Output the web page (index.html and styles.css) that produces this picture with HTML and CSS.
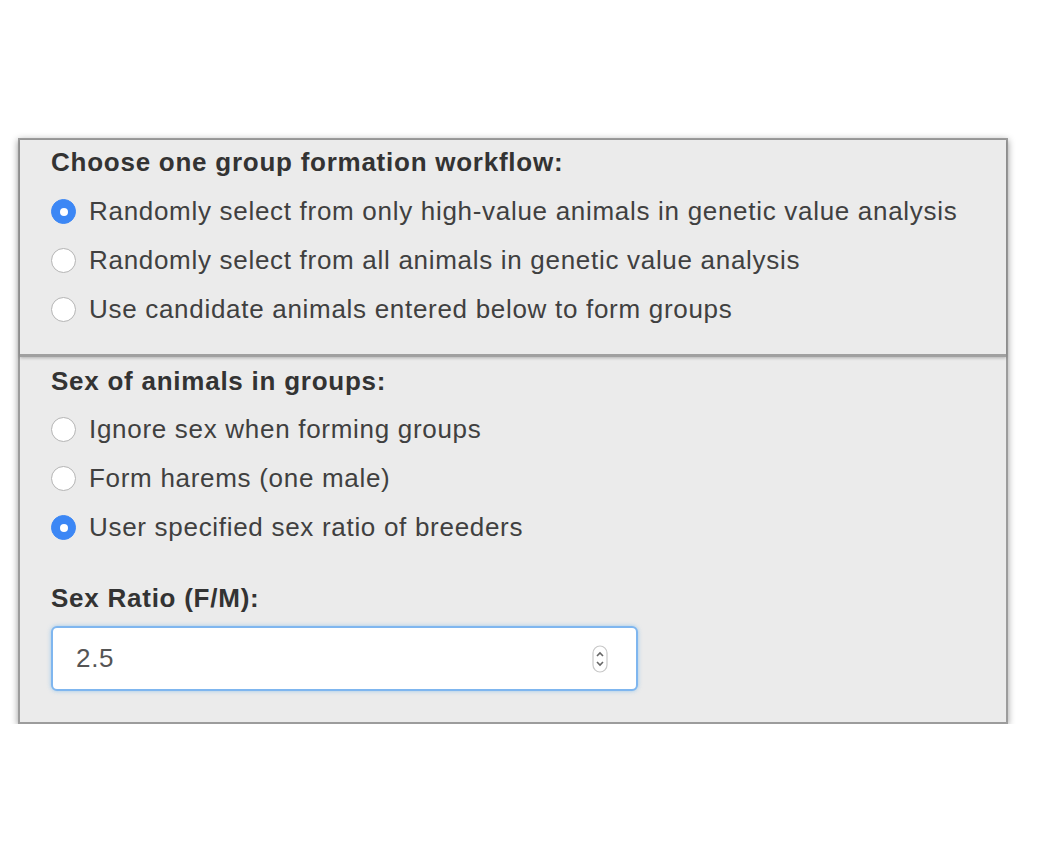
FILE: index.html
```html
<!DOCTYPE html>
<html>
<head>
<meta charset="utf-8">
<link rel="stylesheet" href="styles.css">
</head>
<body>
<div class="box">
  <div class="well well-top">
    <div class="label">Choose one group formation workflow:</div>
    <div class="radios">
      <label class="radio"><span class="dot on"></span><span>Randomly select from only high-value animals in genetic value analysis</span></label>
      <label class="radio"><span class="dot"></span><span>Randomly select from all animals in genetic value analysis</span></label>
      <label class="radio"><span class="dot"></span><span>Use candidate animals entered below to form groups</span></label>
    </div>
  </div>
  <div class="well well-bottom">
    <div class="label">Sex of animals in groups:</div>
    <div class="radios">
      <label class="radio"><span class="dot"></span><span>Ignore sex when forming groups</span></label>
      <label class="radio"><span class="dot"></span><span>Form harems (one male)</span></label>
      <label class="radio"><span class="dot on"></span><span>User specified sex ratio of breeders</span></label>
    </div>
    <div class="label label-ratio">Sex Ratio (F/M):</div>
    <div class="input">
      <span class="value">2.5</span>
      <svg class="spin" width="16" height="28" viewBox="0 0 16 28">
        <rect x="1" y="1" width="14" height="26" rx="7" fill="#fff" stroke="#c8c8c8" stroke-width="1.2"/>
        <path d="M5 11 L8 8 L11 11" fill="none" stroke="#666" stroke-width="1.6"/>
        <path d="M5 17 L8 20 L11 17" fill="none" stroke="#666" stroke-width="1.6"/>
      </svg>
    </div>
  </div>
</div>
</body>
</html>
```

FILE: styles.css
```css
html, body {
  margin: 0;
  padding: 0;
  background: #fff;
}
body {
  font-family: "Liberation Sans", Arial, sans-serif;
  color: #333;
}
.box {
  margin: 138px 0 0 18px;
  width: 990px;
  box-sizing: border-box;
  border: 2px solid #9c9c9c;
  box-shadow: 0 2px 7px rgba(0, 0, 0, 0.4);
  background: #ebebeb;
}
.well {
  padding-left: 31px;
  padding-right: 20px;
}
.well-top {
  padding-top: 8px;
  padding-bottom: 20px;
  border-bottom: 3px solid #a0a0a0;
  box-shadow: 0 1px 3px rgba(0, 0, 0, 0.25);
}
.well-bottom {
  padding-top: 10px;
  padding-bottom: 31px;
}
.label {
  font-weight: bold;
  font-size: 26px;
  letter-spacing: 0.75px;
  line-height: 28px;
  color: #333;
}
.radios {
  display: flex;
  flex-direction: column;
  margin-top: 11px;
}
.well-bottom .radios {
  margin-top: 10px;
}
.radio {
  display: flex;
  align-items: center;
  height: 49px;
  font-size: 26px;
  letter-spacing: 0.7px;
  color: #404040;
  gap: 13px;
}
.dot {
  width: 25px;
  height: 25px;
  box-sizing: border-box;
  border-radius: 50%;
  background: #fff;
  border: 1.5px solid #b4b4b4;
  flex: none;
  position: relative;
}
.dot.on {
  background: #3c87f5;
  border-color: #3c87f5;
}
.dot.on::after {
  content: "";
  position: absolute;
  left: 50%;
  top: 50%;
  width: 8px;
  height: 8px;
  margin: -4px 0 0 -4px;
  border-radius: 50%;
  background: #fff;
}
.label-ratio {
  margin-top: 32px;
}
.input {
  margin-top: 14px;
  width: 587px;
  height: 65px;
  box-sizing: border-box;
  background: #fff;
  border: 2px solid #7fb6ef;
  border-radius: 6px;
  box-shadow: 0 0 4px rgba(102, 175, 233, 0.6);
  display: flex;
  align-items: center;
  justify-content: space-between;
  padding: 0 28px 0 23px;
}
.value {
  font-size: 26px;
  letter-spacing: 0.7px;
  color: #555;
}
.spin {
  display: block;
}
```
